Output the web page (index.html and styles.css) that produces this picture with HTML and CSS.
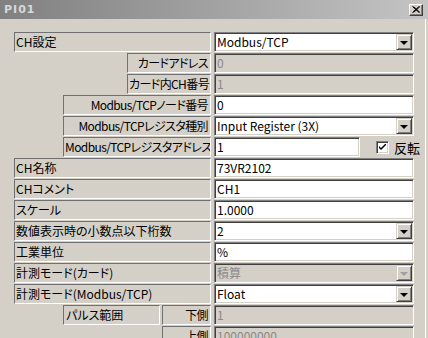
FILE: index.html
```html
<!DOCTYPE html>
<html lang="ja">
<head>
    <meta charset="UTF-8">
    <meta name="viewport" content="width=device-width, initial-scale=1.0">
    <title>PI01</title>
    <link rel="stylesheet" href="styles.css">
</head>
<body>
    <div class="titlebar">
        <span class="title">PI01</span>
        <span class="close">
            <svg width="8" height="7" viewBox="0 0 8 7"><path d="M0.5 0.5 L7 6.5 M1.5 0.5 L8 6.5 M7 0.5 L0.5 6.5 M8 0.5 L1.5 6.5" stroke="#000" stroke-width="1"/></svg>
        </span>
    </div>

    <div class="panel">
        <div class="row">
            <div class="labels"><div class="lbl w-full">CH設定</div></div>
            <div class="field combo"><span class="val">Modbus/TCP</span><span class="drop"><i></i></span></div>
        </div>
        <div class="row">
            <div class="labels"><div class="lbl r w-short">カードアドレス</div></div>
            <div class="field off">0</div>
        </div>
        <div class="row">
            <div class="labels"><div class="lbl r w-short">カード内CH番号</div></div>
            <div class="field off">1</div>
        </div>
        <div class="row">
            <div class="labels"><div class="lbl r w-mid">Modbus/TCPノード番号</div></div>
            <div class="field">0</div>
        </div>
        <div class="row">
            <div class="labels"><div class="lbl r w-mid">Modbus/TCPレジスタ種別</div></div>
            <div class="field combo"><span class="val">Input Register (3X)</span><span class="drop"><i></i></span></div>
        </div>
        <div class="row">
            <div class="labels"><div class="lbl r w-mid">Modbus/TCPレジスタアドレス</div></div>
            <div class="field narrow">1</div>
            <label class="check">
                <span class="box">
                    <svg width="7" height="7" viewBox="0 0 7 7"><path d="M0 2 L0 4 L2 6 L7 1 L7 -1 L2 4 Z" fill="#000"/></svg>
                </span>
                反転
            </label>
        </div>
        <div class="row">
            <div class="labels"><div class="lbl w-full">CH名称</div></div>
            <div class="field">73VR2102</div>
        </div>
        <div class="row">
            <div class="labels"><div class="lbl w-full">CHコメント</div></div>
            <div class="field">CH1</div>
        </div>
        <div class="row">
            <div class="labels"><div class="lbl w-full">スケール</div></div>
            <div class="field">1.0000</div>
        </div>
        <div class="row">
            <div class="labels"><div class="lbl w-full">数値表示時の小数点以下桁数</div></div>
            <div class="field combo"><span class="val">2</span><span class="drop"><i></i></span></div>
        </div>
        <div class="row">
            <div class="labels"><div class="lbl w-full">工業単位</div></div>
            <div class="field">%</div>
        </div>
        <div class="row">
            <div class="labels"><div class="lbl w-full">計測モード(カード)</div></div>
            <div class="field combo off"><span class="val">積算</span><span class="drop"><i></i></span></div>
        </div>
        <div class="row">
            <div class="labels"><div class="lbl w-full">計測モード(Modbus/TCP)</div></div>
            <div class="field combo"><span class="val">Float</span><span class="drop"><i></i></span></div>
        </div>
        <div class="row">
            <div class="labels">
                <div class="lbl w-pulse">パルス範囲</div>
                <div class="lbl r w-side">下側</div>
            </div>
            <div class="field off">1</div>
        </div>
        <div class="row">
            <div class="labels"><div class="lbl r w-side">上側</div></div>
            <div class="field off">100000000</div>
        </div>
    </div>
</body>
</html>
```

FILE: styles.css
```css
* {
    box-sizing: border-box;
}
html, body {
    height: 100%;
}
body {
    margin: 0;
    background: #d4d0c8;
    font-family: "Noto Sans CJK JP", sans-serif;
    font-size: 12px;
    font-feature-settings: "palt";
    color: #000;
    overflow: hidden;
}

/* caption */
.titlebar {
    height: 19px;
    background: linear-gradient(to right, #808080, #c4c4c4);
    display: flex;
    align-items: center;
    justify-content: space-between;
    padding: 0 5px 0 4px;
}
.title {
    color: #d8d8d8;
    font-family: "DejaVu Sans", sans-serif;
    font-weight: bold;
    font-size: 11px;
    letter-spacing: 1px;
}
.close {
    width: 14px;
    height: 12px;
    background: #d4d0c8;
    border: 1px solid;
    border-color: #fff #404040 #404040 #fff;
    box-shadow: inset -1px -1px #808080;
    display: flex;
    align-items: center;
    justify-content: center;
}

/* dialog rows */
.panel {
    width: 426px;
    height: 100%;
    border-right: 1px solid #fff;
    padding: 13px 0 0 14px;
    display: flex;
    flex-direction: column;
    gap: 1px;
}
.row {
    display: flex;
    height: 20px;
    flex-shrink: 0;
    gap: 3px;
}
.labels {
    width: 197px;
    display: flex;
    justify-content: flex-end;
    gap: 2px;
}
.lbl {
    height: 20px;
    border: 1px solid;
    border-color: #707070 #fff #fff #707070;
    line-height: 18px;
    padding: 0 1px;
    white-space: nowrap;
    overflow: hidden;
}
.lbl.r {
    text-align: right;
    letter-spacing: -0.6px;
    padding-right: 2px;
}
.w-full { width: 197px; }
.w-mid { width: 148px; }
.w-short { width: 84px; }
.w-pulse { width: 97px; padding-left: 2px; }
.w-side { width: 49px; }

/* edit boxes */
.field {
    width: 200px;
    height: 20px;
    border: 1px solid;
    border-color: #808080 #fff #fff #808080;
    box-shadow: inset 1px 1px #404040, inset -1px -1px #d4d0c8;
    background: #fff;
    padding: 1px 1px 1px 2px;
    line-height: 16px;
    white-space: nowrap;
}
.field.narrow {
    width: 146px;
}
.field.off {
    background: #d4d0c8;
    color: #8a8a8a;
}
.combo {
    display: flex;
    justify-content: space-between;
}
.drop {
    width: 16px;
    height: 16px;
    background: #d4d0c8;
    border: 1px solid;
    border-color: #d4d0c8 #404040 #404040 #d4d0c8;
    box-shadow: inset 1px 1px #fff, inset -1px -1px #808080;
    display: flex;
    align-items: center;
    justify-content: center;
}
.drop i {
    width: 0;
    height: 0;
    border-left: 4px solid transparent;
    border-right: 4px solid transparent;
    border-top: 4px solid #000;
    margin-top: 1px;
}
.off .drop i {
    border-top-color: #a0a0a0;
}

/* checkbox */
.check {
    display: flex;
    align-items: center;
    gap: 5px;
    margin-left: 13px;
    font-size: 13px;
}
.box {
    width: 13px;
    height: 13px;
    background: #fff;
    border: 1px solid;
    border-color: #808080 #fff #fff #808080;
    box-shadow: inset 1px 1px #404040, inset -1px -1px #d4d0c8;
    display: flex;
    align-items: center;
    justify-content: center;
}
```
